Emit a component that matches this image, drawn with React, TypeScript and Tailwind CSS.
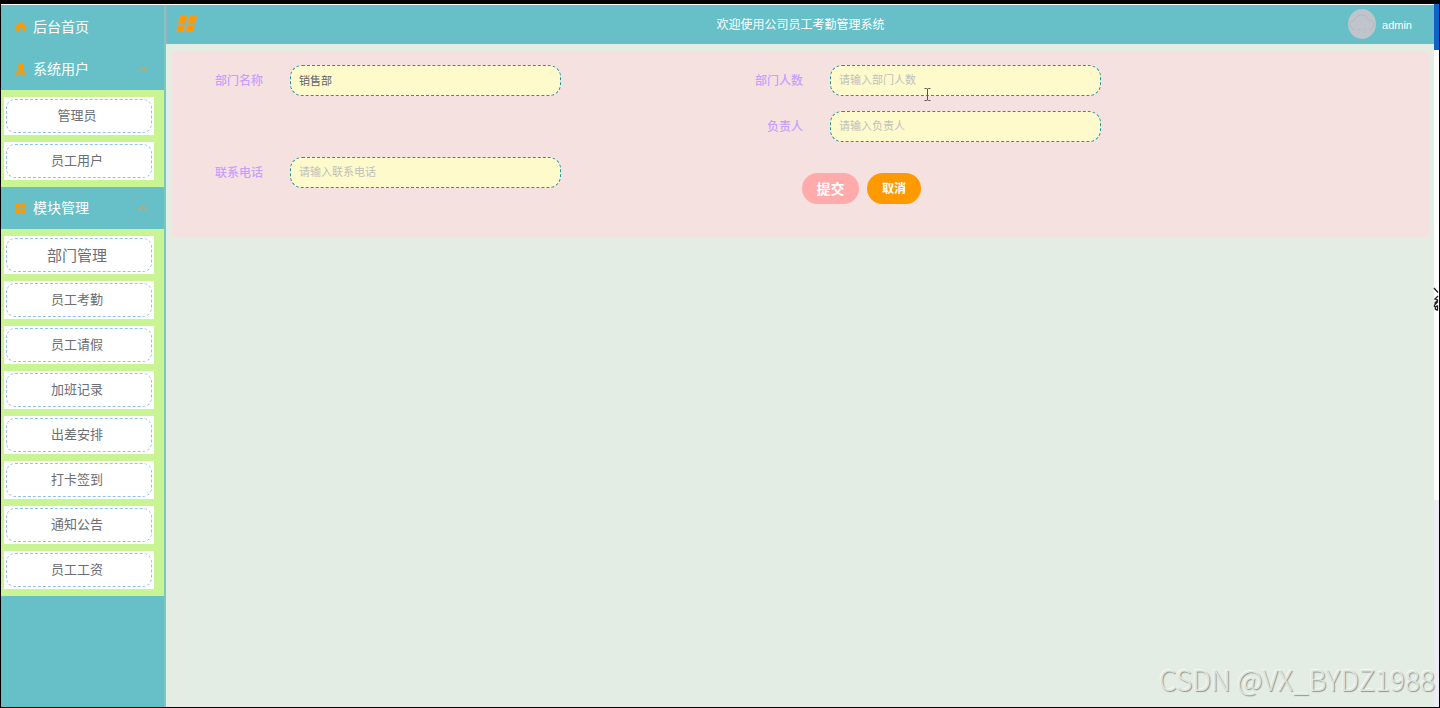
import { useState } from 'react';
import type { ReactNode } from 'react';

const HomeIcon = () => (
  <svg viewBox="0 0 12 12" className="h-3 w-3 shrink-0" fill="#ff9900" aria-hidden="true">
    <path d="M6 0.8 0.7 5.3v1h.6V11h3V8a1.7 1.7 0 0 1 3.4 0v3h3V6.3h.6v-1z" />
  </svg>
);

const UserIcon = () => (
  <svg viewBox="0 0 12 12" className="h-3 w-3 shrink-0" fill="#ff9900" aria-hidden="true">
    <circle cx="6" cy="3.6" r="3" />
    <path d="M4.6 5.500h2.800v1.700c2.600.3 3.900 1.300 3.900 2.600H.7c0-1.300 1.300-2.300 3.900-2.600z" />
    <path d="M0.700 10.300h10.600v1.200H.7z" />
  </svg>
);

const GridIcon = () => (
  <svg viewBox="0 0 12 12" className="h-3 w-3 shrink-0" fill="#ff9900" aria-hidden="true">
    <path d="M1 1h4.500v4.500H1zM6.500 1H11v4.500H6.500zM1 6.500h4.500V11H1zM6.500 6.500H11V11H6.500z" />
  </svg>
);

const Chevron = () => (
  <svg viewBox="0 0 10 6" className="h-1.5 w-2.5 shrink-0" fill="none" stroke="#d9a352" strokeWidth="1.2" aria-hidden="true">
    <path d="M0.5 5.5 L5 1 L9.5 5.5" />
  </svg>
);

const MenuIcon = () => (
  <svg viewBox="0 0 22 18" className="h-[18px] w-[22px]" fill="#ff9900" stroke="#c9ab84" strokeWidth="0.5" aria-hidden="true">
    <path d="M4 .8h7.200L9.400 8H2.200zM13.200.8h7.800L19.200 8h-7.600zM2 9.800h7.200L7.400 17H.4zM11.200 9.800h7.600L17 17H9.400z" />
  </svg>
);

const Avatar = () => (
  <svg viewBox="0 0 28 30" className="h-[30px] w-7" aria-hidden="true">
    <ellipse cx="14" cy="15" rx="14" ry="15" fill="#c0c4cc" />
    <path
      d="M7 20.500C4 20.500 2 18.500 2 16c0-2.500 1.800-4.200 4-4.200C7 8 10 6 13.500 6c3.500 0 6 2 7 5 3.500 0 5.500 2 5.500 4.800 0 2.700-2 4.700-5 4.700M10 20.500h2M16 20.500h2M11 23.500h1M15 23.500h1"
      fill="none"
      stroke="#b8b9be"
      strokeWidth="1"
    />
  </svg>
);

function SubMenu({ items, active }: { items: string[]; active?: string }) {
  return (
    <ul className="flex flex-col gap-[7px] bg-[#c9f493] py-[7px] pr-2.5 pl-[3px]">
      {items.map((item) => (
        <li key={item} className="h-[38px] bg-white p-0.5">
          <a
            href="#"
            className={
              item === active
                ? 'flex h-full items-center justify-center rounded-[9px] border border-dashed border-[#8fc1f3] pt-0.5 pr-1 text-[15px] text-[#6b6e74]'
                : 'flex h-full items-center justify-center rounded-[9px] border border-dashed border-[#8fc1f3] pr-1 text-[13px] text-[#6b6e74]'
            }
          >
            {item}
          </a>
        </li>
      ))}
    </ul>
  );
}

function MenuTitle({ icon, label, children }: { icon: ReactNode; label: string; children?: ReactNode }) {
  const [open, setOpen] = useState(true);
  return (
    <li>
      <button
        type="button"
        onClick={() => setOpen(!open)}
        className="flex h-[42px] w-full items-center gap-1.5 pr-4 pl-[14px] text-sm text-white"
      >
        {icon}
        <span className="flex-1 text-left">{label}</span>
        {children && <Chevron />}
      </button>
      {open && children}
    </li>
  );
}

function Field({ id, label, value, placeholder }: { id: string; label: string; value?: string; placeholder?: string }) {
  return (
    <div className="flex items-center gap-[27px]">
      <label htmlFor={id} className="w-[91px] text-right text-xs font-medium text-[#c79ffc]">
        {label}
      </label>
      <input
        id={id}
        type="text"
        defaultValue={value}
        placeholder={placeholder}
        className="h-[31px] w-[271px] rounded-xl border border-dashed border-[#2592a4] bg-[#fffacb] px-2 pb-0.5 text-[11px] text-[#606266] outline-none placeholder:text-[#bdc1bd]"
      />
    </div>
  );
}

export default function App() {
  return (
    <div className="relative flex min-h-screen flex-col overflow-hidden border-x border-t-4 border-b border-black bg-[#e3ede3] font-['Liberation_Sans','Noto_Sans_CJK_SC',sans-serif]">
      <div className="flex flex-1">
        <div className="flex flex-1 border-t border-white">
          <nav className="w-[165px] shrink-0 border-t border-r-2 border-t-[#7fb5bb] border-r-[#7cc8bd] bg-[#67bfc7]">
            <ul>
              <MenuTitle icon={<HomeIcon />} label="后台首页" />
              <MenuTitle icon={<UserIcon />} label="系统用户">
                <SubMenu items={['管理员', '员工用户']} />
              </MenuTitle>
              <MenuTitle icon={<GridIcon />} label="模块管理">
                <SubMenu
                  active="部门管理"
                  items={['部门管理', '员工考勤', '员工请假', '加班记录', '出差安排', '打卡签到', '通知公告', '员工工资']}
                />
              </MenuTitle>
            </ul>
          </nav>

          <div className="flex-1">
            <header className="grid h-[39px] grid-cols-[1fr_auto_1fr] items-center border-t border-l border-t-[#7fb5bb] border-l-[#9aacc9] bg-[#67bfc7] px-[9px] pb-[3px] text-white">
              <div>
                <button type="button" aria-label="菜单" className="block">
                  <MenuIcon />
                </button>
              </div>
              <h1 className="pt-0.5 text-xs">欢迎使用公司员工考勤管理系统</h1>
              <div className="flex items-center justify-end gap-1.5 pr-[13px]">
                <Avatar />
                <span className="pt-1 text-[11px]">admin</span>
              </div>
            </header>

            <main className="pt-[7px] pr-[5px] pl-1.5">
              <form
                onSubmit={(e) => e.preventDefault()}
                className="grid grid-cols-[540px_1fr] content-start gap-y-[15px] bg-[#f6e1e1] pt-3.5 pb-[33px]"
              >
                <Field id="name" label="部门名称" value="销售部" />
                <Field id="count" label="部门人数" placeholder="请输入部门人数" />
                <div className="col-start-2">
                  <Field id="leader" label="负责人" placeholder="请输入负责人" />
                </div>
                <div className="self-start">
                  <Field id="phone" label="联系电话" placeholder="请输入联系电话" />
                </div>
                <div className="flex items-center gap-2 pt-4 pl-[90px]">
                  <button type="submit" className="h-[31px] w-[57px] rounded-full bg-[#ffabab] text-sm font-bold text-white">
                    提交
                  </button>
                  <button type="button" className="h-[31px] w-[54px] rounded-full bg-[#ff9900] text-xs font-bold text-white">
                    取消
                  </button>
                </div>
              </form>
            </main>
          </div>
        </div>

        <div className="flex w-[5px] shrink-0 flex-col bg-[#edebf3]">
          <div className="h-[46px] bg-[#0b62c9]" />
          <div className="h-[450px] bg-white" />
        </div>
      </div>

      <svg viewBox="0 0 7 13" className="pointer-events-none absolute top-[84px] left-[923px] h-[13px] w-[7px]" fill="none" stroke="#555555" aria-hidden="true">
        <path d="M.5.5h2l1 .5 1-.5h2M.5 12.500h2l1-.5 1 .5h2M3.500 1v11" />
      </svg>
      <svg viewBox="0 0 6 26" className="pointer-events-none absolute top-[283px] right-0 h-[26px] w-1.5" fill="none" stroke="#222222" strokeWidth="1.3" aria-hidden="true">
        <path d="M1 1l4 4.500M5 9 2 12l3 1M5 13 1.500 16.500M1.500 18 5 14.500M4.500 19c-3 0-3 4 0 4zM1.500 18v2" />
      </svg>
      <p className="pointer-events-none absolute right-1 bottom-2 font-['Noto_Sans_CJK_SC',sans-serif] text-[28px] leading-10 font-light whitespace-nowrap text-[#e0e4e0] [text-shadow:1px_1px_1px_#8d948d,-1px_-1px_0_#f4f8f4]">
        CSDN @VX_BYDZ1988
      </p>
    </div>
  );
}
